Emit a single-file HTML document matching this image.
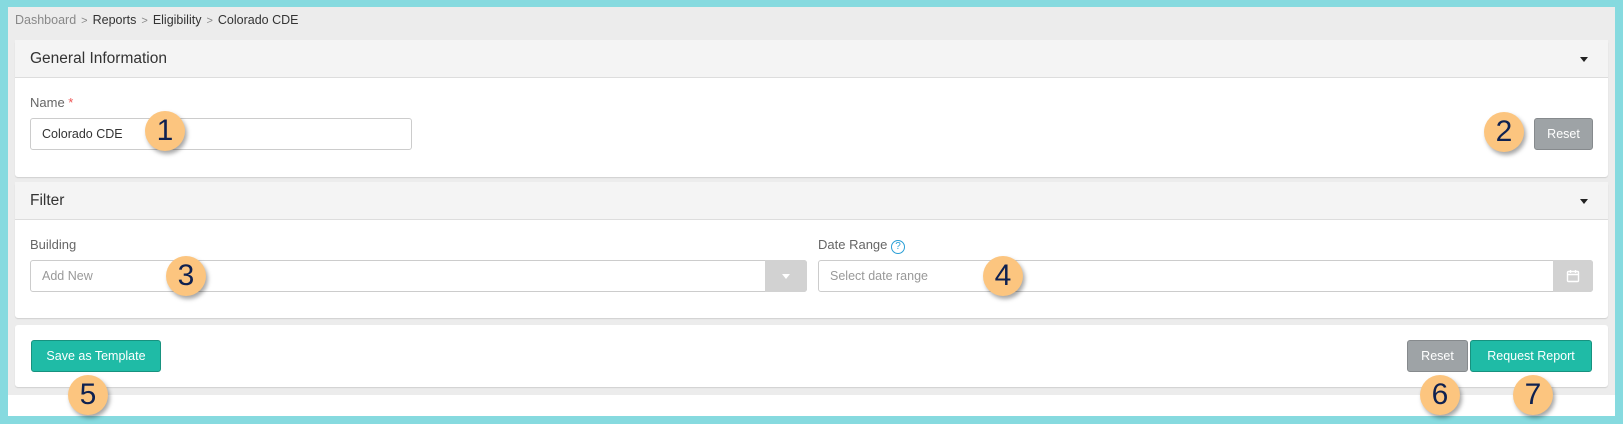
<!DOCTYPE html>
<html><head><style>
*{box-sizing:border-box;margin:0;padding:0}
body{width:1623px;height:424px;background:#86dadf;font-family:"Liberation Sans",sans-serif;position:relative;overflow:hidden}
.frame{position:absolute;left:8px;top:7px;width:1607px;height:409px;background:#fff}
.gray{position:absolute;left:8px;top:7px;width:1607px;height:388px;background:#ececec}
.abs{position:absolute}
.crumb{left:15px;top:13px;font-size:12.5px;color:#333}
.crumb .d{color:#888}.crumb .s{color:#888;margin:0 5px;font-size:11px}
.card{position:absolute;left:15px;width:1593px;background:#fff;border-radius:3px;box-shadow:0 1px 1px rgba(0,0,0,.12)}
.hdr{height:38px;background:#f4f4f4;border-bottom:1px solid #ddd;font-size:15.5px;color:#333;padding:10px 15px;position:relative}
.caret{position:absolute;right:20px;top:17px;width:0;height:0;border-left:4px solid transparent;border-right:4px solid transparent;border-top:5px solid #222}
.lbl{font-size:13px;color:#666}
.inp{position:absolute;height:32px;border:1px solid #ccc;border-radius:3px;background:#fff;font-size:12.5px;padding:8px 11px;color:#333}
.ph{color:#999}
.add{position:absolute;right:-1px;top:-1px;height:32px;width:42px;background:#d2d2d2;border-radius:0 3px 3px 0}
.btn{position:absolute;height:32px;border-radius:3px;color:#fff;font-size:12.5px;text-align:center;line-height:31px}
.t{background:#1fbba6;border:1px solid #17927f}
.g{background:#9ea3a6;border:1px solid #868a8d}
.c{position:absolute;width:40px;height:40px;border-radius:50%;background:#fcc57f;box-shadow:2px 3px 4px rgba(0,0,0,.35);color:#0f2150;font-size:30px;text-align:center;line-height:40px}
</style></head><body>
<div class="frame"></div><div class="gray"></div>
<div class="abs crumb"><span class="d">Dashboard</span><span class="s">&gt;</span>Reports<span class="s">&gt;</span>Eligibility<span class="s">&gt;</span>Colorado CDE</div>

<div class="card" style="top:40px;height:137px">
 <div class="hdr">General Information<div class="caret"></div></div>
 <div class="abs lbl" style="left:15px;top:55px">Name <span style="color:#e55">*</span></div>
 <div class="inp" style="left:15px;top:78px;width:382px">Colorado CDE</div>
 <div class="btn g" style="left:1519px;top:78px;width:59px">Reset</div>
</div>

<div class="card" style="top:182px;height:136px">
 <div class="hdr">Filter<div class="caret"></div></div>
 <div class="abs lbl" style="left:15px;top:55px">Building</div>
 <div class="inp ph" style="left:15px;top:78px;width:777px">Add New<div class="add"><div class="caret" style="right:17px;top:14px;border-top-color:#fff"></div></div></div>
 <div class="abs lbl" style="left:803px;top:55px">Date Range <span style="display:inline-block;width:14px;height:14px;border:1.3px solid #2a9fd6;border-radius:50%;color:#2a9fd6;font-size:10px;text-align:center;line-height:12px;vertical-align:0">?</span></div>
 <div class="inp ph" style="left:803px;top:78px;width:775px">Select date range<div class="add" style="width:40px">
  <svg width="14" height="14" viewBox="0 0 14 14" style="position:absolute;left:13px;top:9px" fill="none" stroke="#fff" stroke-width="1.4"><rect x="1.5" y="2.5" width="11" height="10" rx="1"/><path d="M1.5 5.5h11M4.5 1v3M9.5 1v3"/></svg></div></div>
</div>

<div class="card" style="top:325px;height:62px">
 <div class="btn t" style="left:16px;top:15px;width:130px">Save as Template</div>
 <div class="btn g" style="left:1392px;top:15px;width:61px">Reset</div>
 <div class="btn t" style="left:1455px;top:15px;width:122px">Request Report</div>
</div>

<div class="c" style="left:145px;top:111px">1</div>
<div class="c" style="left:1484px;top:112px">2</div>
<div class="c" style="left:166px;top:256px">3</div>
<div class="c" style="left:983px;top:256px">4</div>
<div class="c" style="left:68px;top:375px">5</div>
<div class="c" style="left:1420px;top:375px">6</div>
<div class="c" style="left:1513px;top:375px">7</div>
</body></html>
